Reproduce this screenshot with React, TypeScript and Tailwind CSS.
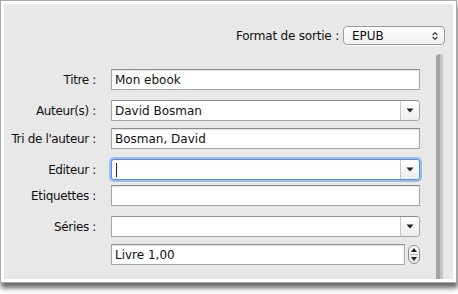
import { ChevronsUpDown } from 'lucide-react'

type Row = { label: string; kind: 'text' | 'combo' | 'focus' | 'spin'; value?: string; mt: string }

// top margins follow the irregular Aqua spacing of the original dialog
const ROWS: Row[] = [
  { label: 'Titre :',           kind: 'text',  value: 'Mon ebook',     mt: 'mt-[24px]' },
  { label: 'Auteur(s) :',       kind: 'combo', value: 'David Bosman',  mt: 'mt-[10px]' },
  { label: "Tri de l'auteur :", kind: 'text',  value: 'Bosman, David', mt: 'mt-[7px]' },
  { label: 'Editeur :',         kind: 'focus',                         mt: 'mt-[10px]' },
  { label: 'Etiquettes :',      kind: 'text',                          mt: 'mt-[5px]' },
  { label: 'Séries :',          kind: 'combo',                         mt: 'mt-[10px]' },
  { label: '',                  kind: 'spin',  value: 'Livre 1,00',    mt: 'mt-[7px]' },
]

function DownArrow() {
  return (
    <svg width="8" height="5" viewBox="0 0 8 5" className="block">
      <path d="M0.5 0.5 L7.5 0.5 L4 4.5 Z" fill="#222" />
    </svg>
  )
}

function TextField({ value }: { value?: string }) {
  return (
    <div className="h-[21px] flex-1 flex items-center border border-[#a6a6a6] border-t-[#8c8c8c] bg-white pl-[3px] shadow-[inset_0_1px_1px_rgba(0,0,0,0.12)] text-[12px] text-[#111]">
      {value}
    </div>
  )
}

function Combo({ value, focused }: { value?: string; focused?: boolean }) {
  return (
    <div
      className={
        focused
          ? 'h-[21px] flex-1 flex items-stretch border border-[#5d8fd6] rounded-[3px] bg-white shadow-[0_0_0_2px_#9dbde9]'
          : 'h-[21px] flex-1 flex items-stretch border border-[#a6a6a6] border-t-[#8c8c8c] rounded-r-[4px] bg-white'
      }
    >
      <div className="flex-1 flex items-center pl-[3px] text-[12px] text-[#111]">
        {focused ? <span className="block w-px h-[14px] bg-[#222] ml-[1px]" /> : value}
      </div>
      <div className="w-[19px] flex items-center justify-center border-l border-[#c9c9c9] rounded-r-[3px] bg-gradient-to-b from-white to-[#ececec]">
        <DownArrow />
      </div>
    </div>
  )
}

function Stepper() {
  return (
    <div className="ml-[3px] w-[12px] h-[19px] flex flex-col items-center justify-center gap-[2px] rounded-full border border-[#8f8f8f] bg-gradient-to-b from-white to-[#e4e4e4]">
      <svg width="6" height="4" viewBox="0 0 6 4" className="block">
        <path d="M0 4 L3 0 L6 4 Z" fill="#222" />
      </svg>
      <span className="block w-[8px] h-px bg-[#b8b8b8]" />
      <svg width="6" height="4" viewBox="0 0 6 4" className="block">
        <path d="M0 0 L6 0 L3 4 Z" fill="#222" />
      </svg>
    </div>
  )
}

export default function App() {
  return (
    <div className="w-[458px] h-[294px] bg-white font-['DejaVu_Sans',sans-serif] text-[#111]">
      <div className="w-[457px] h-[283px] border border-[#a9a9a9] bg-white p-[3px] shadow-[1px_5px_5px_rgba(0,0,0,0.6)]">
        <div className="h-full bg-[#e8e8e8] flex flex-col overflow-hidden">
          {/* output format */}
          <div className="pt-[22px] pr-[8px] flex items-center justify-end">
            <span className="text-[12px] mr-[4px] tracking-[-0.2px]">Format de sortie :</span>
            <div className="w-[102px] h-[19px] flex items-center justify-between pl-[8px] pr-[4px] rounded-[4px] border border-[#9b9b9b] bg-gradient-to-b from-white to-[#f0f0f0] shadow-[0_1px_0_rgba(255,255,255,0.8)]">
              <span className="text-[12px] font-medium text-[#111]">EPUB</span>
              <ChevronsUpDown size={10} strokeWidth={2.6} className="text-[#333]" />
            </div>
          </div>

          <div className="flex-1 flex">
            {/* metadata form */}
            <div className="flex flex-col">
              {ROWS.map((row, i) => (
                <div key={i} className={row.mt + ' flex items-center'}>
                  <div className="w-[93px] pr-[1px] text-right text-[12px] tracking-[-0.35px] whitespace-nowrap">{row.label}</div>
                  <div className="ml-[14px] w-[309px] flex items-center">
                    {row.kind === 'text' && <TextField value={row.value} />}
                    {row.kind === 'combo' && <Combo value={row.value} />}
                    {row.kind === 'focus' && <Combo focused />}
                    {row.kind === 'spin' && (
                      <>
                        <TextField value={row.value} />
                        <Stepper />
                      </>
                    )}
                  </div>
                </div>
              ))}
            </div>

            {/* scroll bar */}
            <div className="ml-[16px] mt-[9px] w-[11px] flex">
              <div className="w-[7px] h-full rounded-t-full bg-[#a4a4a4] border-r-[3px] border-[#c4c4c4]" />
            </div>
          </div>
        </div>
      </div>
    </div>
  )
}
